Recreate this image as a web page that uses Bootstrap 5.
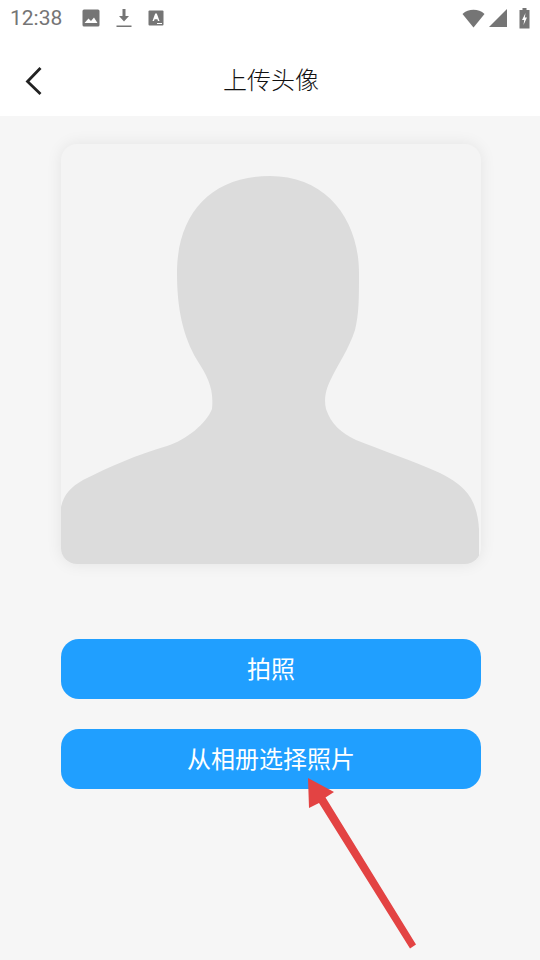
<!DOCTYPE html>
<html lang="zh-CN">
  <head>
    <meta charset="UTF-8" />
    <meta name="viewport" content="width=device-width, initial-scale=1.0" />
    <title>上传头像</title>
    <link
      href="https://cdn.jsdelivr.net/npm/bootstrap@5.3.2/dist/css/bootstrap.min.css"
      rel="stylesheet"
    />
    <style>
      body {
        background-color: #f6f6f6;
        font-family: "Noto Sans CJK SC", Roboto, sans-serif;
        height: 960px;
        overflow: hidden;
      }
      .app-top {
        background-color: #fff;
        height: 116px;
      }
      .status-row {
        height: 36px;
        padding: 0 10px;
        color: #757575;
      }
      .status-time {
        font-family: Roboto, sans-serif;
        font-size: 21px;
        line-height: 36px;
        width: 72px;
      }
      .status-gap {
        margin-left: 16px;
      }
      .battery-icon {
        margin-left: 12px;
      }
      .title-row {
        height: 80px;
      }
      .back-btn {
        left: 24px;
        top: 30px;
        line-height: 0;
      }
      .page-title {
        font-size: 24px;
        line-height: 32px;
        color: #111;
        margin: 0 0 0 2px;
        font-weight: 300;
        position: relative;
        top: 3px;
      }
      .page-body {
        padding: 28px 59px 0 61px;
      }
      .avatar-box {
        width: 420px;
        height: 420px;
        background-color: #f4f4f4;
        border-radius: 16px;
        box-shadow: 0 0 16px rgba(0, 0, 0, 0.08);
        overflow: hidden;
        margin-bottom: 75px;
      }
      .avatar-box svg {
        display: block;
      }
      .btn-stack {
        gap: 30px;
      }
      .btn-upload {
        height: 60px;
        border: 0;
        border-radius: 18px;
        background-color: #209fff;
        color: #fff;
        font-size: 24px;
        line-height: 30px;
        padding: 0 0 2px;
      }
      .btn-upload:hover {
        background-color: #209fff;
        color: #fff;
      }
      .hint-arrow {
        left: 0;
        top: 0;
        pointer-events: none;
      }
    </style>
  </head>
  <body class="position-relative">
    <div class="app-top">
      <div class="status-row d-flex align-items-center">
        <span class="status-time">12:38</span>
        <svg width="18" height="18" viewBox="0 0 18 18">
          <rect x="0.5" y="0.5" width="17" height="17" rx="1.5" fill="#757575" />
          <path d="M2.5 14 L6.5 9.5 L9 12 L12 8.5 L15.5 14 Z" fill="#fff" />
        </svg>
        <svg width="16" height="20" viewBox="0 0 16 20" class="status-gap">
          <path d="M6.5 1 H9.5 V8 H13 L8 13.5 L3 8 H6.5 Z" fill="#757575" />
          <rect x="0.5" y="17.5" width="15" height="1.5" fill="#757575" />
        </svg>
        <svg width="16" height="16" viewBox="0 0 16 16" class="status-gap">
          <rect x="0.5" y="0.5" width="15" height="15" rx="1" fill="#757575" />
          <path d="M4.5 11 L7.2 3.5 H8.8 L11.5 11 H10 L9.4 9.3 H6.6 L6 11 Z" fill="#fff" />
          <rect x="9" y="13" width="5" height="1" fill="#fff" />
        </svg>
        <div class="ms-auto d-flex align-items-center">
          <svg width="23" height="19" viewBox="0 0 23 19">
            <path d="M0.5 5 C6.5 -0.6 16.5 -0.6 22.5 5 L11.5 18.5 Z" fill="#757575" />
          </svg>
          <svg width="18" height="18" viewBox="0 0 18 18" class="ms-1">
            <path d="M18 0 V18 H0 Z" fill="#757575" />
          </svg>
          <svg width="11" height="21" viewBox="0 0 11 21" class="battery-icon">
            <path d="M3.5 0 H7.5 V2 H10.5 V20.5 H0.5 V2 H3.5 Z" fill="#757575" />
            <path d="M6.5 5 L3 12 H5.2 L4.5 17 L8 9.5 H5.8 Z" fill="#fff" />
          </svg>
        </div>
      </div>
      <div class="title-row position-relative d-flex justify-content-center align-items-center">
        <a href="#" class="back-btn position-absolute" aria-label="返回">
          <svg width="20" height="30" viewBox="0 0 20 30">
            <path d="M16.5 2 L3.5 15.5 L16.5 28" fill="none" stroke="#222" stroke-width="2.8" />
          </svg>
        </a>
        <h1 class="page-title">上传头像</h1>
      </div>
    </div>

    <div class="page-body">
      <div class="avatar-box">
        <svg width="420" height="420" viewBox="0 0 420 420">
          <path
            d="M0 420 V363 C3 350 10 343 22 336 C50 322 75 311 106 302 C125 296 145 280 151 265 C153 245 147 233 136 216 C122 192 116 165 116 129 C116 70 150 32 209 32 C265 32 298 75 298 129 C298 155 298 170 294 186 C288 205 276 222 270 235 C264 247 263 256 265 265 C270 280 280 289 295 296 C320 306 350 316 379 329 C405 342 416 355 418 385 V412 C416 418 412 420 405 420 Z"
            fill="#dcdcdc"
          />
        </svg>
      </div>
      <div class="d-grid btn-stack">
        <button type="button" class="btn btn-upload">拍照</button>
        <button type="button" class="btn btn-upload">从相册选择照片</button>
      </div>
    </div>

    <svg class="hint-arrow position-absolute" width="540" height="960" viewBox="0 0 540 960">
      <path d="M308 778 L334 792 L325.5 797.5 L416 944.5 L410 948.5 L319 803 L309 808 Z" fill="#e34343" />
    </svg>

    <script src="https://cdn.jsdelivr.net/npm/bootstrap@5.3.2/dist/js/bootstrap.bundle.min.js"></script>
  </body>
</html>
